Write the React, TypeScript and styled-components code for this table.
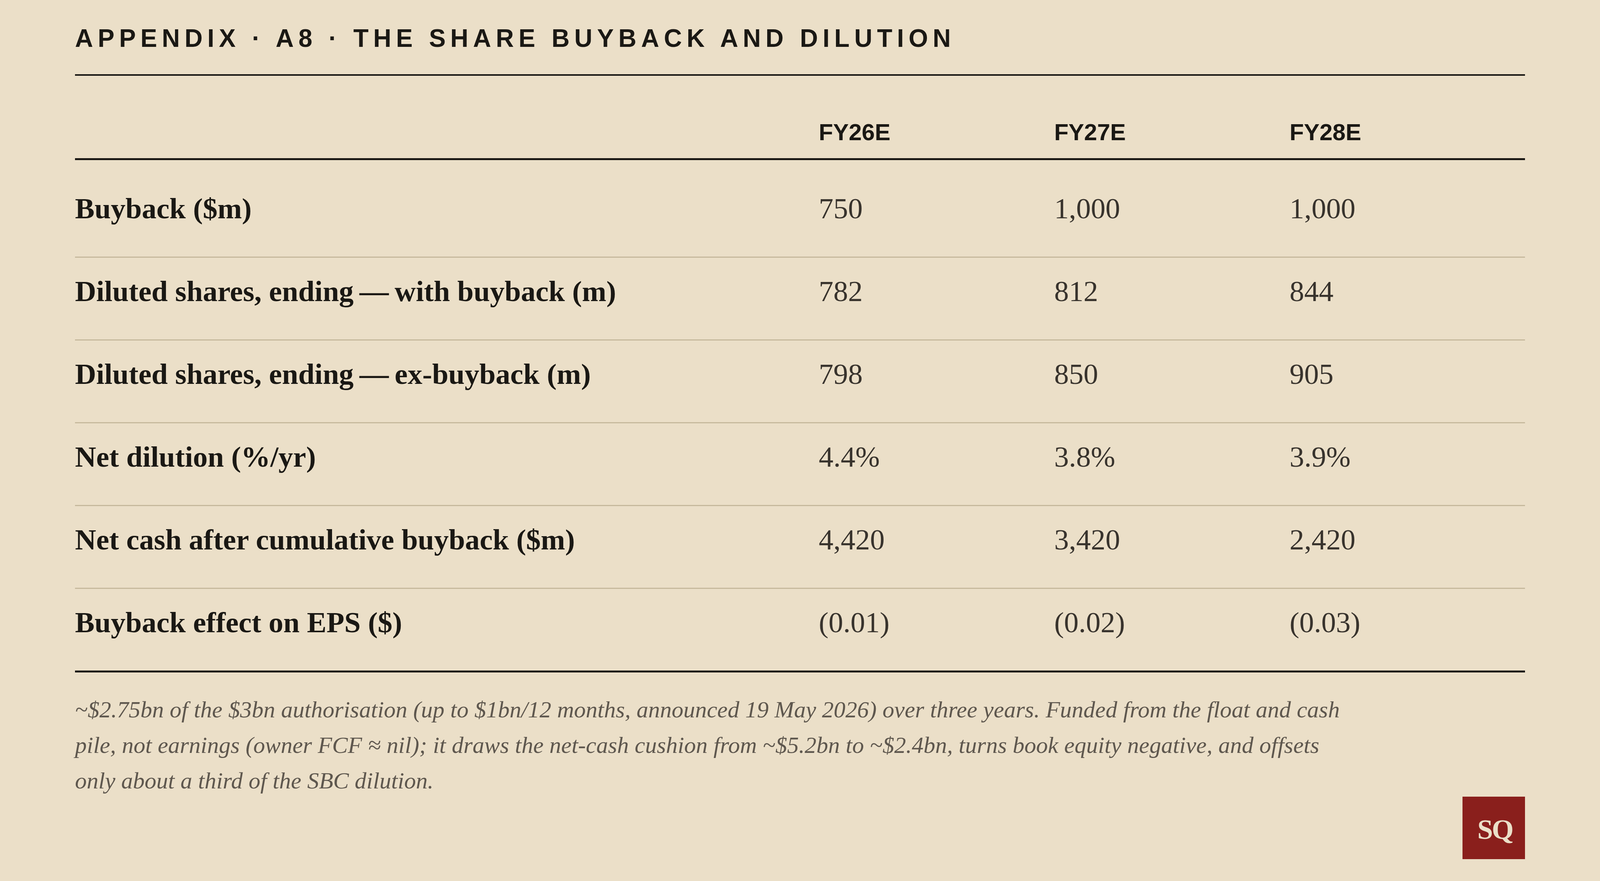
import React from "react";
import styled, { createGlobalStyle } from "styled-components";

const GlobalStyle = createGlobalStyle`
  html, body {
    margin: 0;
    padding: 0;
    background: #ebdfc8;
  }
  * { box-sizing: border-box; }
`;

const Page = styled.div`
  min-height: 2256px;
  display: flex;
  flex-direction: column;
  padding: 66px 192px 56px;
  background: #ebdfc8;
  color: #1a1814;
`;

const Title = styled.h1`
  margin: 0;
  padding-bottom: 60px;
  border-bottom: 4px solid #1a1814;
  font-family: "Liberation Sans", Arial, sans-serif;
  font-weight: 700;
  font-size: 64px;
  line-height: 1;
  letter-spacing: 12px;
  text-transform: uppercase;
  color: #1a1814;
`;

const Table = styled.div`
  display: flex;
  flex-direction: column;
  border-bottom: 5px solid #1a1814;
`;

const HeaderRow = styled.div`
  display: grid;
  grid-template-columns: 1904px 1fr 1fr 1fr;
  padding: 115px 0 36px;
  border-bottom: 5px solid #1a1814;
`;

const HeaderCell = styled.div`
  font-family: "Liberation Sans", Arial, sans-serif;
  font-weight: 700;
  font-size: 60px;
  line-height: 1;
  color: #1a1814;
`;

const Row = styled.div<{ $first?: boolean; $last?: boolean }>`
  display: grid;
  grid-template-columns: 1904px 1fr 1fr 1fr;
  padding: ${(p) => (p.$first ? "87px" : "49px")} 0 86px;
  border-bottom: ${(p) => (p.$last ? "none" : "3px solid #c6b99d")};
`;

const LabelCell = styled.div`
  font-family: "Liberation Serif", "Times New Roman", serif;
  font-weight: 700;
  font-size: 75px;
  line-height: 74px;
  color: #1a1814;
  white-space: nowrap;
`;

const ValueCell = styled.div`
  font-family: "Liberation Serif", "Times New Roman", serif;
  font-weight: 400;
  font-size: 75px;
  line-height: 74px;
  color: #38332d;
  white-space: nowrap;
`;

const Footer = styled.div`
  flex: 1;
  display: grid;
  grid-template-columns: 1fr 160px;
  margin-top: 50px;
`;

const Footnote = styled.p`
  margin: 0;
  align-self: start;
  font-family: "Liberation Serif", "Times New Roman", serif;
  font-style: italic;
  font-size: 60px;
  line-height: 91px;
  color: #5e574e;
  white-space: nowrap;
`;

const Logo = styled.div`
  align-self: end;
  width: 160px;
  height: 160px;
  background: #8a1f1c;
  color: #ebdfc8;
  display: flex;
  align-items: center;
  justify-content: center;
  font-family: "Liberation Serif", "Times New Roman", serif;
  font-weight: 700;
  font-size: 72px;
  letter-spacing: -3px;
  padding-top: 8px;
  padding-left: 6px;
`;

const years = ["FY26E", "FY27E", "FY28E"];

const rows: { label: string; values: string[] }[] = [
  { label: "Buyback ($m)", values: ["750", "1,000", "1,000"] },
  { label: "Diluted shares, ending\u2009—\u2009with buyback (m)", values: ["782", "812", "844"] },
  { label: "Diluted shares, ending\u2009—\u2009ex-buyback (m)", values: ["798", "850", "905"] },
  { label: "Net dilution (%/yr)", values: ["4.4%", "3.8%", "3.9%"] },
  { label: "Net cash after cumulative buyback ($m)", values: ["4,420", "3,420", "2,420"] },
  { label: "Buyback effect on EPS ($)", values: ["(0.01)", "(0.02)", "(0.03)"] },
];

export default function App() {
  return (
    <>
      <GlobalStyle />
      <Page>
        <Title>Appendix · A8 · The Share Buyback and Dilution</Title>
        <Table>
          <HeaderRow>
            <div />
            {years.map((y) => (
              <HeaderCell key={y}>{y}</HeaderCell>
            ))}
          </HeaderRow>
          {rows.map((r, i) => (
            <Row key={r.label} $first={i === 0} $last={i === rows.length - 1}>
              <LabelCell>{r.label}</LabelCell>
              {r.values.map((v, j) => (
                <ValueCell key={j}>{v}</ValueCell>
              ))}
            </Row>
          ))}
        </Table>
        <Footer>
          <Footnote>
            ~$2.75bn of the $3bn authorisation (up to $1bn/12 months, announced 19 May 2026) over three years. Funded from the float and cash
            <br />
            pile, not earnings (owner FCF ≈ nil); it draws the net-cash cushion from ~$5.2bn to ~$2.4bn, turns book equity negative, and offsets
            <br />
            only about a third of the SBC dilution.
          </Footnote>
          <Logo>SQ</Logo>
        </Footer>
      </Page>
    </>
  );
}
